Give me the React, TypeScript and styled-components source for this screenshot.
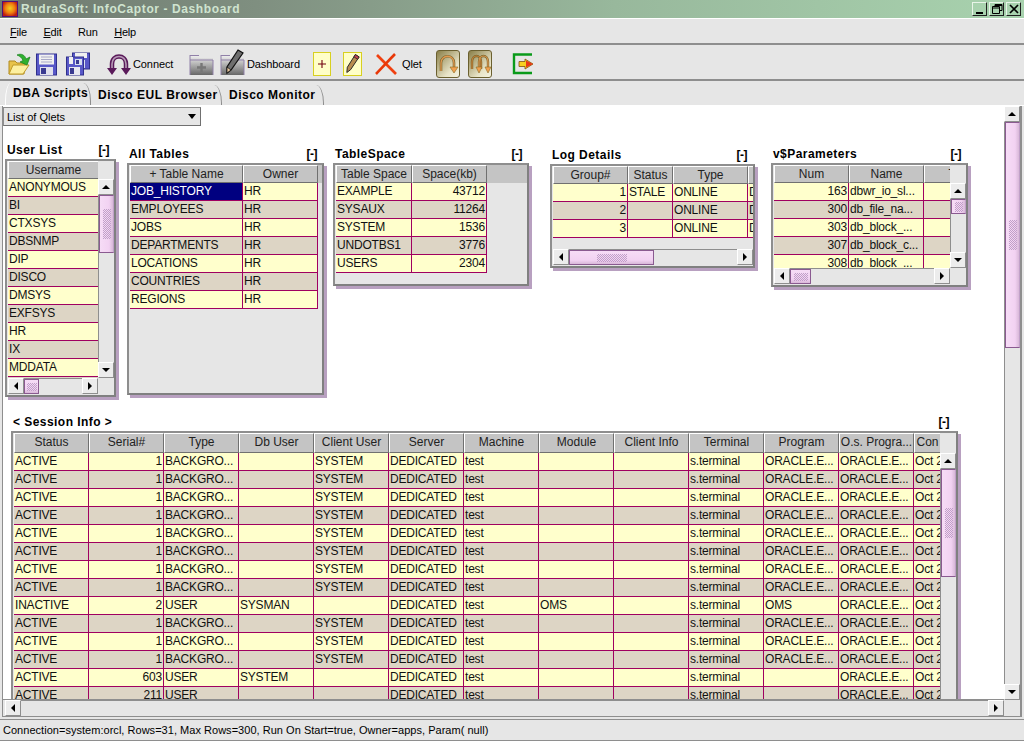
import React from 'react';
import styled, {createGlobalStyle} from 'styled-components';

const GlobalStyle = createGlobalStyle`
    html, body {
        margin: 0;
        padding: 0;
        background: #e6e6e6;
    }
    body {
        font-family: "Liberation Sans", Arial, sans-serif;
        font-size: 12px;
        color: #000;
    }
`

type Align = 'left' | 'right';
type Column = { title: string; width: number; align?: Align };
type Cell = string | number;

const sessionColumns: Column[] = [
    {title: 'Status', width: 75},
    {title: 'Serial#', width: 75, align: 'right'},
    {title: 'Type', width: 75},
    {title: 'Db User', width: 75},
    {title: 'Client User', width: 75},
    {title: 'Server', width: 75},
    {title: 'Machine', width: 75},
    {title: 'Module', width: 75},
    {title: 'Client Info', width: 75},
    {title: 'Terminal', width: 75},
    {title: 'Program', width: 75},
    {title: 'O.s. Progra...', width: 75},
    {title: 'Con', width: 27},
];

const bg = (status: string, serial: number): Cell[] =>
    [status, serial, 'BACKGRO...', '', 'SYSTEM', 'DEDICATED', 'test', '', '', 's.terminal', 'ORACLE.E...', 'ORACLE.E...', 'Oct 2'];

const sessionRows: Cell[][] = [
    ...Array.from({length: 8}, () => bg('ACTIVE', 1)),
    ['INACTIVE', 2, 'USER', 'SYSMAN', '', 'DEDICATED', 'test', 'OMS', '', 's.terminal', 'OMS', 'ORACLE.E...', 'Oct 2'],
    ...Array.from({length: 3}, () => bg('ACTIVE', 1)),
    ['ACTIVE', 603, 'USER', 'SYSTEM', '', 'DEDICATED', 'test', '', '', 's.terminal', '', 'ORACLE.E...', 'Oct 2'],
    ['ACTIVE', 211, 'USER', '', '', 'DEDICATED', 'test', '', '', 's.terminal', '', 'ORACLE.E...', 'Oct 2'],
];

const Table: React.FC<{
    columns: Column[]; rows: Cell[][]; selected?: [number, number]; filler?: boolean; headerHeight?: number;
}> = ({columns, rows, selected, filler, headerHeight = 18}) => (
    <TableBox>
        <HeaderRow $h={headerHeight}>
            {columns.map(c => <HeaderCell key={c.title} $width={c.width}>{c.title}</HeaderCell>)}
            {filler && <HeaderFiller/>}
        </HeaderRow>
        {rows.map((row, i) => (
            <Row key={i} $odd={i % 2 === 1}>
                {row.map((cell, j) => (
                    <DataCell
                        key={j}
                        $width={columns[j].width}
                        $align={columns[j].align ?? 'left'}
                        $selected={!!selected && selected[0] === i && selected[1] === j}
                    >
                        {cell}
                    </DataCell>
                ))}
            </Row>
        ))}
    </TableBox>
);

const Arrow: React.FC<{ dir: 'up' | 'down' | 'left' | 'right' }> = ({dir}) => {
    const points = {
        up: '1,7 9,7 5,3',
        down: '1,3 9,3 5,7',
        left: '7,1 7,9 3,5',
        right: '3,1 3,9 7,5',
    }[dir];
    return <svg width="10" height="10" viewBox="0 0 10 10"><polygon points={points} fill="#000"/></svg>;
};

const VScroll: React.FC<{ size: number; grip?: number }> = ({size, grip = 30}) => (
    <VTrack>
        <ArrowButton><Arrow dir="up"/></ArrowButton>
        <VLane>
            <VThumb $size={size}><Grip $w={8} $h={Math.min(grip, size - 4)}/></VThumb>
        </VLane>
        <ArrowButton><Arrow dir="down"/></ArrowButton>
    </VTrack>
);

const HScroll: React.FC<{ size: number; grip?: number }> = ({size, grip = 28}) => (
    <HTrack>
        <ArrowButton><Arrow dir="left"/></ArrowButton>
        <HLane>
            <HThumb $size={size}><Grip $w={Math.min(grip, size - 4)} $h={8}/></HThumb>
        </HLane>
        <ArrowButton><Arrow dir="right"/></ArrowButton>
    </HTrack>
);

const Qlet: React.FC<{
    title: string; x: number; y: number; w: number; h: number; togglePad: number; children: React.ReactNode;
}> = ({title, x, y, w, h, togglePad, children}) => (
    <QletBox $x={x} $y={y} $w={w}>
        <QletTitle $right={togglePad}>
            <span>{title}</span>
            <Toggle>[-]</Toggle>
        </QletTitle>
        <QletFrame $h={h}>{children}</QletFrame>
    </QletBox>
);

const Folder: React.FC = () => (
    <svg width="24" height="24" viewBox="0 0 24 24">
        <path d="M1 9 L1 22 L16 22 L17 11 L9 11 L7 9 Z" fill="#e8c34a" stroke="#b08a20"/>
        <path d="M1 22 L5 13 L21 13 L15 22 Z" fill="#fdf0a0" stroke="#c09a28"/>
        <path d="M9 3 C13 1 17 3 18 7 L22 5 L19 13 L12 10 L15 8.5 C14 6 12 4 9 3 Z" fill="#30b030" stroke="#148018" strokeWidth=".7"/>
    </svg>
);

const Floppy: React.FC = () => (
    <svg width="21" height="24" viewBox="0 0 21 24">
        <rect x="0.5" y="2" width="20" height="21" fill="#5858c8" stroke="#30308c"/>
        <rect x="3" y="2.5" width="15" height="10" fill="#f0f0f0"/>
        <path d="M5 5H16M5 7.5H16M5 10H16" stroke="#a8a8c8"/>
        <rect x="4" y="15" width="13" height="8" fill="#e0e0ec"/>
        <rect x="5" y="16" width="5" height="6" fill="#3a3a90"/>
    </svg>
);

const FloppyAll: React.FC = () => (
    <svg width="24" height="24" viewBox="0 0 24 24">
        <rect x="6.5" y="1" width="17" height="16" fill="#5858c8" stroke="#30308c"/>
        <rect x="9" y="1" width="12" height="5" fill="#f0f0f0"/>
        <rect x="10" y="8" width="9" height="8" fill="#d8e0f0"/>
        <rect x="11" y="9" width="4" height="6" fill="#3a3a90"/>
        <rect x="0.5" y="5" width="17" height="18" fill="#5858c8" stroke="#30308c"/>
        <rect x="3" y="5" width="4" height="7" fill="#f0f0f0"/>
        <rect x="9" y="7" width="7" height="6" fill="#d8e0f0"/>
        <rect x="10" y="8" width="3" height="4" fill="#3a3a90"/>
        <rect x="3" y="15" width="11" height="8" fill="#e8e8f0"/>
        <rect x="4" y="16" width="4" height="6" fill="#3a3a90"/>
    </svg>
);

const Horseshoe: React.FC = () => (
    <svg width="24" height="24" viewBox="0 0 24 24">
        <path d="M5 18 V12 C5 2 19 2 19 12 V18" fill="none" stroke="#5a1a5a" strokeWidth="4.5"/>
        <path d="M5 18 V12 C5 2 19 2 19 12 V18" fill="none" stroke="#b79ab7" strokeWidth="1.6"/>
        <path d="M0 16 L10 16 L5 23 Z M14 16 L24 16 L19 23 Z" fill="#5a1a5a"/>
    </svg>
);

const GreyFolder: React.FC<{ children?: React.ReactNode }> = ({children}) => (
    <svg width="25" height="24" viewBox="0 0 25 24">
        <defs>
            <linearGradient id="gf" x1="0" y1="0" x2="0" y2="1">
                <stop offset="0" stopColor="#f4f4f4"/>
                <stop offset="1" stopColor="#686868"/>
            </linearGradient>
        </defs>
        <path d="M1 3 H10 V6 H24 V23 H1 Z" fill="url(#gf)"/>
        <path d="M1 3.5 H10 M1 8 H24 M1 3 V23 M24 8 V23" stroke="#9080a8" fill="none"/>
        {children}
    </svg>
);

const Pencil: React.FC = () => (
    <svg width="24" height="26" viewBox="0 0 24 26">
        <path d="M16 1 L21 4 L9 21 L5 24 L5 18 Z" fill="#6e6e6e" stroke="#111" strokeWidth="1.2"/>
        <path d="M5 18 L9 21 L5 24 Z" fill="#e8c8a0" stroke="#111" strokeWidth=".8"/>
    </svg>
);

const ColourPencil: React.FC = () => (
    <svg width="18" height="22" viewBox="0 0 18 22" style={{display: 'block'}}>
        <path d="M12 1 L16 3.5 L7 17 L3 20 L3.5 14.5 Z" fill="#b88c50" stroke="#222" strokeWidth="1"/>
        <path d="M12 1 L16 3.5 L14.5 6 L10.5 3.5 Z" fill="#c04050" stroke="#222" strokeWidth=".8"/>
    </svg>
);

const RedCross: React.FC = () => (
    <svg width="22" height="22" viewBox="0 0 22 22">
        <path d="M2 2 C8 8 14 14 21 21" stroke="#f04010" strokeWidth="2.6" fill="none"/>
        <path d="M20 1 C14 7 8 14 1 21" stroke="#e83808" strokeWidth="2.6" fill="none"/>
    </svg>
);

const ArcButton: React.FC<{ twin?: boolean }> = ({twin}) => (
    <ArcFace>
        <svg width="22" height="24" viewBox="0 0 22 24">
            {twin ? (
                <>
                    <path d="M3 17 V10 C3 2 12 2 12 10 V17" fill="none" stroke="#7a6830" strokeWidth="2.4"/>
                    <path d="M10 17 V10 C10 2 19 2 19 10 V17" fill="none" stroke="#7a6830" strokeWidth="2.4"/>
                    <path d="M3 17 V10 C3 2 12 2 12 10 V17" fill="none" stroke="#c88038" strokeWidth="1.2"/>
                    <path d="M10 17 V10 C10 2 19 2 19 10 V17" fill="none" stroke="#e09850" strokeWidth="1.2"/>
                    <path d="M7 15 H13 L10 21 Z M16 15 H22 L19 21 Z" fill="#f0a050" stroke="#8a6a20" strokeWidth=".6"/>
                </>
            ) : (
                <>
                    <path d="M4 19 V11 C4 2 17 2 17 11 V16" fill="none" stroke="#7a6830" strokeWidth="2.6"/>
                    <path d="M4 19 V11 C4 2 17 2 17 11 V16" fill="none" stroke="#e09850" strokeWidth="1.3"/>
                    <path d="M13 15 H21 L17 21 Z" fill="#f0a050" stroke="#8a6a20" strokeWidth=".6"/>
                </>
            )}
        </svg>
    </ArcFace>
);

const ExitIcon: React.FC = () => (
    <svg width="22" height="24" viewBox="0 0 22 24">
        <path d="M20 2.5 H2 V21 H20" fill="none" stroke="#0a9a1a" strokeWidth="2.4"/>
        <path d="M7 9.5 H13 V7 L21 12 L13 17 V14.5 H7 Z" fill="#f8d020" stroke="#805010" strokeWidth=".8"/>
        <path d="M14 8.5 L21 12 L14 15.5 Z" fill="#e83818"/>
    </svg>
);

const App: React.FC = () => (
    <Page>
        <GlobalStyle/>
        <TitleBar>
            <AppIcon/>
            <TitleText>RudraSoft: InfoCaptor - Dashboard</TitleText>
            <WindowButtons>
                <WindowButton>
                    <svg width="12" height="12" viewBox="0 0 12 12"><rect x="2" y="9" width="7" height="2" fill="#000"/></svg>
                </WindowButton>
                <WindowButton>
                    <svg width="12" height="12" viewBox="0 0 12 12">
                        <path d="M4 1.5H11V7.5H9M4 1.5V3.5M1.5 3.5H8.5V10.5H1.5Z M1.5 5H8.5 M4 2.5H11" fill="none" stroke="#000"/>
                    </svg>
                </WindowButton>
                <WindowButton>
                    <svg width="12" height="12" viewBox="0 0 12 12"><path d="M2 2L10 10M10 2L2 10" stroke="#000" strokeWidth="1.7"/></svg>
                </WindowButton>
            </WindowButtons>
        </TitleBar>

        <MenuBar>
            <MenuItem><u>F</u>ile</MenuItem>
            <MenuItem><u>E</u>dit</MenuItem>
            <MenuItem>Run</MenuItem>
            <MenuItem><u>H</u>elp</MenuItem>
        </MenuBar>

        <Toolbar>
            <Tool $w={28}><Folder/></Tool>
            <Tool $w={30}><Floppy/></Tool>
            <Tool $w={41}><FloppyAll/></Tool>
            <Tool $w={26}><Horseshoe/></Tool>
            <ToolLabel $w={56}>Connect</ToolLabel>
            <Tool $w={31}>
                <GreyFolder>
                    <path d="M12.5 11V20M8 15.5H17" stroke="#777" strokeWidth="2.4"/>
                </GreyFolder>
            </Tool>
            <Tool $w={27}>
                <GreyFolder/>
                <PencilOver><Pencil/></PencilOver>
            </Tool>
            <ToolLabel $w={66}>Dashboard</ToolLabel>
            <YellowTool $w={18}>
                <svg width="8" height="8" viewBox="0 0 8 8"><path d="M4 0V8M0 4H8" stroke="#700010" strokeWidth="1.1"/></svg>
            </YellowTool>
            <Gap $w={12}/>
            <YellowTool $w={19}><ColourPencil/></YellowTool>
            <Gap $w={13}/>
            <Tool $w={27}><RedCross/></Tool>
            <ToolLabel $w={34}>Qlet</ToolLabel>
            <ArcButton/>
            <Gap $w={8}/>
            <ArcButton twin/>
            <Gap $w={20}/>
            <Tool $w={24}><ExitIcon/></Tool>
        </Toolbar>

        <TabStrip>
            <Tab $active $w={86}>DBA Scripts</Tab>
            <Tab $w={131}>Disco EUL Browser</Tab>
            <Tab $w={102}>Disco Monitor</Tab>
        </TabStrip>

        <Workspace>
            <Canvas>
                <Combo>
                    <span>List of Qlets</span>
                    <svg width="8" height="5" viewBox="0 0 8 5"><polygon points="0,0 8,0 4,5" fill="#000"/></svg>
                </Combo>

                <Qlet title="User List" x={2} y={36} w={111} h={238} togglePad={7}>
                    <FrameGrid>
                        <Clip>
                            <Table
                                columns={[{title: 'Username', width: 91}]}
                                rows={['ANONYMOUS', 'BI', 'CTXSYS', 'DBSNMP', 'DIP', 'DISCO', 'DMSYS', 'EXFSYS', 'HR', 'IX', 'MDDATA', 'MGMT'].map(u => [u])}
                            />
                        </Clip>
                        <VScrollSlot><HeaderStub/><VScroll size={58} grip={30}/></VScrollSlot>
                        <HScroll size={15} grip={10}/>
                        <Corner/>
                    </FrameGrid>
                </Qlet>

                <Qlet title="All Tables" x={124} y={40} w={197} h={232} togglePad={7}>
                    <Clip>
                        <Table
                            filler
                            columns={[{title: '+ Table Name', width: 113}, {title: 'Owner', width: 75}]}
                            selected={[0, 0]}
                            rows={['JOB_HISTORY', 'EMPLOYEES', 'JOBS', 'DEPARTMENTS', 'LOCATIONS', 'COUNTRIES', 'REGIONS'].map(t => [t, 'HR'])}
                        />
                    </Clip>
                </Qlet>

                <Qlet title="TableSpace" x={330} y={40} w={196} h={123} togglePad={7}>
                    <Clip>
                        <Table
                            filler
                            columns={[{title: 'Table Space', width: 76}, {title: 'Space(kb)', width: 75, align: 'right'}]}
                            rows={[['EXAMPLE', 43712], ['SYSAUX', 11264], ['SYSTEM', 1536], ['UNDOTBS1', 3776], ['USERS', 2304]]}
                        />
                    </Clip>
                </Qlet>

                <Qlet title="Log Details" x={547} y={41} w={205} h={104} togglePad={8}>
                    <FrameColumn>
                        <Clip>
                            <Table
                                columns={[
                                    {title: 'Group#', width: 75, align: 'right'},
                                    {title: 'Status', width: 45},
                                    {title: 'Type', width: 75},
                                    {title: '', width: 12},
                                ]}
                                rows={[
                                    [1, 'STALE', 'ONLINE', 'D'],
                                    [2, '', 'ONLINE', 'D'],
                                    [3, '', 'ONLINE', 'D'],
                                ]}
                            />
                        </Clip>
                        <HScroll size={85} grip={30}/>
                    </FrameColumn>
                </Qlet>

                <Qlet title="v$Parameters" x={768} y={40} w={197} h={124} togglePad={7}>
                    <FrameGrid>
                        <Clip>
                            <Table
                                columns={[
                                    {title: 'Num', width: 75, align: 'right'},
                                    {title: 'Name', width: 75},
                                    {title: 'Type', width: 75},
                                ]}
                                rows={[
                                    [163, 'dbwr_io_sl...', ''],
                                    [300, 'db_file_na...', ''],
                                    [303, 'db_block_...', ''],
                                    [307, 'db_block_c...', ''],
                                    [308, 'db_block_...', ''],
                                ]}
                            />
                        </Clip>
                        <VScrollSlot><HeaderStub/><VScroll size={15} grip={10}/></VScrollSlot>
                        <HScroll size={21} grip={14}/>
                        <Corner/>
                    </FrameGrid>
                </Qlet>

                <Qlet title="< Session Info >" x={8} y={308} w={947} h={400} togglePad={9}>
                    <FrameGrid>
                        <Clip>
                            <Table columns={sessionColumns} rows={sessionRows} headerHeight={20}/>
                        </Clip>
                        <VScrollSlot><SessionStub/><VScroll size={108} grip={30}/></VScrollSlot>
                    </FrameGrid>
                </Qlet>
            </Canvas>
            <MainV>
                <ArrowButton><Arrow dir="up"/></ArrowButton>
                <VLane>
                    <VThumb $size={226}><Grip $w={8} $h={30}/></VThumb>
                </VLane>
                <ArrowButton><Arrow dir="down"/></ArrowButton>
            </MainV>
            <MainH>
                <ArrowButton><Arrow dir="left"/></ArrowButton>
                <HLane/>
                <ArrowButton><Arrow dir="right"/></ArrowButton>
            </MainH>
            <Corner/>
        </Workspace>

        <StatusBar>Connection=system:orcl, Rows=31, Max Rows=300, Run On Start=true, Owner=apps, Param( null)</StatusBar>
    </Page>
);

export default App;

const Page = styled.div`
    width: 1024px;
    height: 741px;
    display: flex;
    flex-direction: column;
    overflow: hidden;
    background: #e6e6e6;
`

const TitleBar = styled.div`
    height: 18px;
    flex: none;
    box-sizing: border-box;
    display: flex;
    align-items: center;
    padding: 0 3px 0 2px;
    background: linear-gradient(to right, #6f7a70 0%, #7f8f80 25%, #98b89c 60%, #a8d2ae 100%);
`

const AppIcon = styled.div`
    width: 14px;
    height: 14px;
    border: 1px solid #50107a;
    background: radial-gradient(circle at 50% 45%, #f0d020 0%, #f08010 45%, #c02010 80%);
`

const TitleText = styled.div`
    flex: 1;
    margin-left: 3px;
    font-size: 12px;
    font-weight: bold;
    letter-spacing: .6px;
    color: #d0e4d0;
`

const WindowButtons = styled.div`
    display: flex;
    gap: 2px;
`

const WindowButton = styled.div`
    width: 15px;
    height: 14px;
    box-sizing: border-box;
    display: flex;
    align-items: center;
    justify-content: center;
    background: #a8d2ae;
    border: 1px solid;
    border-color: #e8f4e8 #202020 #202020 #e8f4e8;
`

const MenuBar = styled.div`
    height: 27px;
    flex: none;
    box-sizing: border-box;
    display: flex;
    align-items: center;
    gap: 16.5px;
    padding: 1px 0 0 10px;
    border-top: 1px solid #fff;
    border-bottom: 2px solid #8e8e8e;
`

const MenuItem = styled.div`
    font-size: 11px;
    letter-spacing: -.2px;
`

const Toolbar = styled.div`
    height: 36px;
    flex: none;
    box-sizing: border-box;
    display: flex;
    align-items: center;
    padding: 3px 0 0 8px;
    border-bottom: 2px solid #8e8e8e;
`

const Tool = styled.div<{ $w: number }>`
    position: relative;
    width: ${p => p.$w}px;
    flex: none;
    display: flex;
    align-items: center;
`

const PencilOver = styled.div`
    position: absolute;
    left: 2px;
    top: -3px;
`

const ToolLabel = styled.div<{ $w: number }>`
    width: ${p => p.$w}px;
    flex: none;
    font-size: 11px;
    letter-spacing: -.1px;
`

const Gap = styled.div<{ $w: number }>`
    width: ${p => p.$w}px;
    flex: none;
`

const YellowTool = styled.div<{ $w: number }>`
    width: ${p => p.$w}px;
    height: 24px;
    flex: none;
    box-sizing: border-box;
    display: flex;
    align-items: center;
    justify-content: center;
    background: #ffffc8;
    border: 1px solid #d8d020;
`

const ArcFace = styled.div`
    width: 24px;
    height: 28px;
    flex: none;
    box-sizing: border-box;
    display: flex;
    align-items: center;
    justify-content: center;
    border: 1px solid #6b6030;
    border-radius: 3px;
    background: linear-gradient(135deg, #8a7f48 0%, #e8e4c8 70%, #f4f2e0 100%);
`

const TabStrip = styled.div`
    height: 25px;
    flex: none;
    box-sizing: border-box;
    display: flex;
    align-items: flex-end;
    padding-left: 5px;
    border-bottom: 1px solid #fff;
`

const Tab = styled.div<{ $active?: boolean; $w: number }>`
    width: ${p => p.$w}px;
    flex: none;
    box-sizing: border-box;
    height: ${p => p.$active ? 22 : 20}px;
    padding: 3px 0 0 7px;
    font-size: 12px;
    font-weight: bold;
    letter-spacing: .5px;
    white-space: nowrap;
    border-right: 1px solid #8e8e8e;
    border-left: ${p => p.$active ? '1px solid #fff' : 'none'};
    border-top-left-radius: ${p => p.$active ? '6px 18px' : '0'};
    border-top-right-radius: 8px 18px;
    background: #e6e6e6;
`

const Workspace = styled.div`
    flex: none;
    height: 611px;
    margin: 0 2px;
    box-sizing: border-box;
    display: grid;
    grid-template-columns: 1fr 16px;
    grid-template-rows: 594px 16px;
    border: 1px solid #8e8e8e;
    border-top: none;
    border-right-width: 2px;
    background: #e6e6e6;
`

const Canvas = styled.div`
    position: relative;
    overflow: hidden;
    box-sizing: border-box;
    background: #fff;
    border-bottom: 1px solid #8e8e8e;
`

const Combo = styled.div`
    width: 198px;
    height: 19px;
    margin-top: 1px;
    box-sizing: border-box;
    display: flex;
    align-items: center;
    justify-content: space-between;
    padding: 0 4px 0 3px;
    font-size: 11px;
    background: #e6e6e6;
    border: 1px solid;
    border-color: #8e8e8e #707070 #707070 #8e8e8e;
`

const QletBox = styled.div<{ $x: number; $y: number; $w: number }>`
    position: absolute;
    left: ${p => p.$x}px;
    top: ${p => p.$y}px;
    width: ${p => p.$w}px;
`

const QletTitle = styled.div<{ $right: number }>`
    height: 17px;
    display: flex;
    justify-content: space-between;
    padding: 0 ${p => p.$right}px 0 2px;
    font-size: 12px;
    font-weight: bold;
    letter-spacing: .45px;
    line-height: 16px;
    white-space: pre;
`

const Toggle = styled.span`
    letter-spacing: -.5px;
`

const QletFrame = styled.div<{ $h: number }>`
    height: ${p => p.$h}px;
    box-sizing: border-box;
    display: flex;
    flex-direction: column;
    overflow: hidden;
    padding: 0 0 1px 1px;
    border: 2px solid #8e8e8e;
    border-color: #8e8e8e #808080 #808080 #8e8e8e;
    background: #e6e6e6;
    box-shadow: 3px 3px 0 #b8a0c0;
`

const FrameGrid = styled.div`
    flex: 1;
    min-height: 0;
    display: grid;
    grid-template-columns: 1fr 16px;
    grid-template-rows: 1fr auto;
`

const FrameColumn = styled.div`
    flex: 1;
    min-height: 0;
    display: flex;
    flex-direction: column;
`

const Clip = styled.div`
    flex: 1;
    min-height: 0;
    min-width: 0;
    overflow: hidden;
`

const TableBox = styled.div`
    width: max-content;
    min-width: 100%;
`

const HeaderRow = styled.div<{ $h: number }>`
    display: flex;
    height: ${p => p.$h}px;
    background: #e6e6e6;
`

const HeaderCell = styled.div<{ $width: number }>`
    width: ${p => p.$width}px;
    flex: none;
    box-sizing: border-box;
    overflow: hidden;
    white-space: nowrap;
    text-align: center;
    font-size: 12px;
    line-height: 16px;
    color: #222;
    background: #c4c4c4;
    border: 1px solid;
    border-color: #fff #707070 #707070 #fff;
`

const HeaderFiller = styled.div`
    flex: 1;
    background: #c4c4c4;
`

const Row = styled.div<{ $odd: boolean }>`
    display: flex;
    width: fit-content;
    height: 18px;
    background: ${p => p.$odd ? '#ddd5c5' : '#ffffcc'};
`

const DataCell = styled.div<{ $width: number; $align: Align; $selected: boolean }>`
    width: ${p => p.$width}px;
    flex: none;
    box-sizing: border-box;
    overflow: hidden;
    white-space: nowrap;
    padding: 0 1px;
    font-size: 12px;
    letter-spacing: -.2px;
    line-height: 17px;
    text-align: ${p => p.$align};
    color: ${p => p.$selected ? '#fff' : '#111'};
    background: ${p => p.$selected ? '#000080' : 'transparent'};
    border-right: 1px solid #a00060;
    border-bottom: 1px solid #a00060;
`

const VScrollSlot = styled.div`
    display: flex;
    flex-direction: column;
    min-height: 0;
`

const HeaderStub = styled.div`
    height: 18px;
    flex: none;
`

const SessionStub = styled(HeaderStub)`
    height: 20px;
`

const VTrack = styled.div`
    flex: 1;
    min-height: 0;
    display: flex;
    flex-direction: column;
    background: #e6e6e6;
`

const HTrack = styled.div`
    height: 16px;
    display: flex;
    background: #e6e6e6;
`

const VLane = styled.div`
    flex: 1;
    min-height: 0;
    background: #e6e6e6;
    border-left: 1px solid #8e8e8e;
`

const HLane = styled.div`
    flex: 1;
    min-width: 0;
    background: #e6e6e6;
    border-top: 1px solid #8e8e8e;
`

const ArrowButton = styled.div`
    width: 16px;
    height: 16px;
    flex: none;
    box-sizing: border-box;
    display: flex;
    align-items: center;
    justify-content: center;
    background: #ececec;
    border: 1px solid;
    border-color: #fff #8e8e8e #8e8e8e #fff;
`

const VThumb = styled.div<{ $size: number }>`
    height: ${p => p.$size}px;
    box-sizing: border-box;
    display: flex;
    align-items: center;
    justify-content: center;
    background: linear-gradient(to right, #f6dcf6, #f2d2f2 70%, #d8b8d8);
    border: 1px solid #8a5a90;
    border-right-color: #c0a0c8;
`

const HThumb = styled.div<{ $size: number }>`
    width: ${p => p.$size}px;
    height: 100%;
    box-sizing: border-box;
    display: flex;
    align-items: center;
    justify-content: center;
    background: linear-gradient(to bottom, #f6dcf6, #f2d2f2 70%, #d8b8d8);
    border: 1px solid #8a5a90;
`

const Grip = styled.div<{ $w: number; $h: number }>`
    width: ${p => p.$w}px;
    height: ${p => p.$h}px;
    background: repeating-conic-gradient(#c0a0c8 0 25%, transparent 0 50%) 0 0 / 2px 2px;
`

const Corner = styled.div`
    background: #e6e6e6;
`

const MainV = styled.div`
    display: flex;
    flex-direction: column;
    min-height: 0;
`

const MainH = styled.div`
    display: flex;
    padding-left: 2px;
`

const StatusBar = styled.div`
    height: 22px;
    flex: none;
    margin-top: 2px;
    box-sizing: border-box;
    padding: 4px 0 0 3px;
    font-size: 11px;
    letter-spacing: .03px;
    border-top: 1px solid #8e8e8e;
    border-bottom: 1px solid #8e8e8e;
    box-shadow: 0 2px 0 #a8d2ae;
`
